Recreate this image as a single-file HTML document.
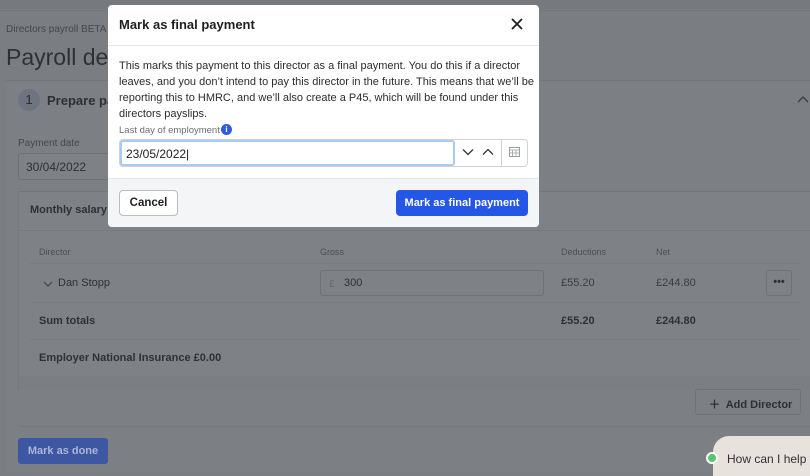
<!DOCTYPE html>
<html><head><meta charset="utf-8"><style>
*{box-sizing:border-box;margin:0;padding:0}
body{width:810px;height:472px;overflow:hidden;background:#7a7d82;font-family:"Liberation Sans",sans-serif;position:relative;color:#2a2c30}
.a{position:absolute}
.m{position:absolute;left:108px;top:5px;width:431px;height:222px;background:#fff;border-radius:4px;overflow:hidden}
</style></head><body>
<div class="a" style="left:0;top:0;width:810px;height:9px;background:#76797e"></div>
<div class="a" style="left:0;top:10px;width:810px;height:1px;background:#73767b"></div>
<div class="a" style="left:6px;top:24px;font-size:10px;color:#44474b">Directors payroll BETA</div>
<div class="a" style="left:6px;top:44px;font-size:23px;color:#2e3034">Payroll details</div>
<div class="a" style="left:6px;top:80px;width:804px;height:392px;background:#7c7f84;border-top:1px solid #73767b"></div>
<div class="a" style="left:18px;top:89px;width:22px;height:22px;border-radius:50%;background:#6d7480;color:#2a2c30;font-size:13px;text-align:center;line-height:22px">1</div>
<div class="a" style="left:47px;top:93px;font-size:13px;font-weight:bold;color:#2e3034">Prepare payroll</div>
<svg class="a" style="left:796px;top:94px" width="14" height="10"><path d="M2 8 L7 3 L12 8" stroke="#3a3c40" fill="none" stroke-width="1.3"/></svg>
<div class="a" style="left:18px;top:138px;font-size:10px;color:#44474b">Payment date</div>
<div class="a" style="left:18px;top:153px;width:100px;height:27px;border:1px solid #6f7277;border-radius:3px;background:#7e8186;padding:6px 7px;font-size:12px;color:#2e3034">30/04/2022</div>
<div class="a" style="left:18px;top:191px;width:792px;height:200px;background:#7e8186;border-left:1px solid #75787d;border-top:1px solid #73767b"></div>
<div class="a" style="left:30px;top:204px;font-size:11px;font-weight:bold;color:#2e3034">Monthly salary t</div>
<div class="a" style="left:18px;top:230px;width:792px;height:1px;background:#76797e"></div>
<div class="a" style="left:39px;top:247px;font-size:9px;color:#4c4f53">Director</div>
<div class="a" style="left:320px;top:247px;font-size:9px;color:#4c4f53">Gross</div>
<div class="a" style="left:561px;top:247px;font-size:9px;color:#4c4f53">Deductions</div>
<div class="a" style="left:656px;top:247px;font-size:9px;color:#4c4f53">Net</div>
<div class="a" style="left:30px;top:263px;width:770px;height:1px;background:#787b80"></div>
<svg class="a" style="left:43px;top:280px" width="10" height="8"><path d="M1 2 L5 6 L9 2" stroke="#3a3c40" fill="none" stroke-width="1"/></svg>
<div class="a" style="left:58px;top:277px;font-size:11px;color:#2e3034">Dan Stopp</div>
<div class="a" style="left:320px;top:270px;width:224px;height:26px;border:1px solid #6f7277;border-radius:3px"></div>
<div class="a" style="left:329px;top:279px;font-size:10px;color:#65686c">£</div>
<div class="a" style="left:344px;top:277px;font-size:11px;color:#2e3034">300</div>
<div class="a" style="left:561px;top:277px;font-size:11px;color:#3a3c40">£55.20</div>
<div class="a" style="left:656px;top:277px;font-size:11px;color:#3a3c40">£244.80</div>
<div class="a" style="left:766px;top:270px;width:26px;height:26px;border:1px solid #6f7277;border-radius:3px;text-align:center;font-size:11px;line-height:22px;font-weight:bold;color:#2e3034">•••</div>
<div class="a" style="left:30px;top:302px;width:770px;height:1px;background:#787b80"></div>
<div class="a" style="left:39px;top:315px;font-size:11px;font-weight:bold;color:#2e3034">Sum totals</div>
<div class="a" style="left:561px;top:315px;font-size:11px;font-weight:bold;color:#2e3034">£55.20</div>
<div class="a" style="left:656px;top:315px;font-size:11px;font-weight:bold;color:#2e3034">£244.80</div>
<div class="a" style="left:30px;top:339px;width:770px;height:1px;background:#787b80"></div>
<div class="a" style="left:39px;top:352px;font-size:11px;font-weight:bold;color:#2e3034">Employer National Insurance £0.00</div>
<div class="a" style="left:19px;top:376px;width:791px;height:14px;background:#7b7e83"></div>
<div class="a" style="left:695px;top:389px;width:106px;height:26px;border:1px solid #6f7277;border-radius:3px;font-size:11px;font-weight:bold;color:#2e3034;padding:6px 0 0 13px">＋&nbsp; Add Director</div>
<div class="a" style="left:19px;top:426px;width:791px;height:1px;background:#75787d"></div>
<div class="a" style="left:18px;top:438px;width:90px;height:26px;border-radius:3px;background:#3e57a3;color:#a9b6d8;font-size:11px;font-weight:bold;text-align:center;line-height:26px">Mark as done</div>
<div class="a" style="left:713px;top:436px;width:110px;height:40px;border-radius:16px 0 0 0;background:#e8e2dc"></div>
<div class="a" style="left:706px;top:452px;width:12px;height:12px;border-radius:50%;background:#5cc46a;border:2px solid #fff"></div>
<div class="a" style="left:727px;top:452px;font-size:12px;color:#2e3034;white-space:nowrap">How can I help y</div>

<div class="m">
 <div class="a" style="left:11px;top:12px;font-size:13px;font-weight:bold;color:#1d1f22">Mark as final payment</div>
 <svg class="a" style="left:402px;top:12px" width="14" height="14"><path d="M2 2 L12 12 M12 2 L2 12" stroke="#1d1f22" stroke-width="1.8"/></svg>
 <div class="a" style="left:0;top:40px;width:431px;height:1px;background:#e4e6e9"></div>
 <div class="a" style="left:11px;top:53px;white-space:nowrap;font-size:11px;line-height:16px;color:#2a2c30">This marks this payment to this director as a final payment. You do this if a director<br>leaves, and you don’t intend to pay this director in the future. This means that we’ll be<br>reporting this to HMRC, and we’ll also create a P45, which will be found under this<br>directors payslips.</div>
 <div class="a" style="left:11px;top:120px;font-size:9.5px;color:#6b6e73">Last day of employment</div>
 <div class="a" style="left:113px;top:119px;width:11px;height:11px;border-radius:50%;background:#2d5be3;color:#fff;font-size:8px;font-weight:bold;text-align:center;line-height:11px">i</div>
 <div class="a" style="left:11px;top:134px;width:409px;height:28px;border:1px solid #cfd2d6;border-radius:4px"></div>
 <div class="a" style="left:12px;top:135px;width:335px;height:26px;border:2px solid #a9cbf2;border-radius:3px;font-size:12px;padding:5px 4px;color:#1d1f22">23/05/2022|</div>
 <svg class="a" style="left:354px;top:143px" width="12" height="8"><path d="M1 1.5 L6 6.5 L11 1.5" stroke="#333" fill="none" stroke-width="1.3"/></svg>
 <svg class="a" style="left:374px;top:143px" width="12" height="8"><path d="M1 6.5 L6 1.5 L11 6.5" stroke="#333" fill="none" stroke-width="1.3"/></svg>
 <div class="a" style="left:393px;top:135px;width:1px;height:26px;background:#cfd2d6"></div>
 <svg class="a" style="left:401px;top:141px" width="11" height="11"><rect x="0.5" y="1.5" width="10" height="9" fill="none" stroke="#9a9da2"/><path d="M0.5 4 H10.5 M3.5 4 V10.5 M7 4 V10.5 M0.5 7 H10.5" stroke="#9a9da2" stroke-width="0.8"/></svg>
 <div class="a" style="left:0;top:173px;width:431px;height:49px;background:#f4f5f6;border-top:1px solid #e4e6e9"></div>
 <div class="a" style="left:11px;top:185px;width:59px;height:26px;background:#fff;border:1px solid #b9bcc1;border-radius:4px;font-size:11.5px;font-weight:bold;text-align:center;line-height:24px;color:#1d1f22">Cancel</div>
 <div class="a" style="left:288px;top:185px;width:132px;height:26px;background:#2557e6;border-radius:4px;font-size:11px;font-weight:bold;text-align:center;line-height:26px;color:#fff">Mark as final payment</div>
</div>
</body></html>
